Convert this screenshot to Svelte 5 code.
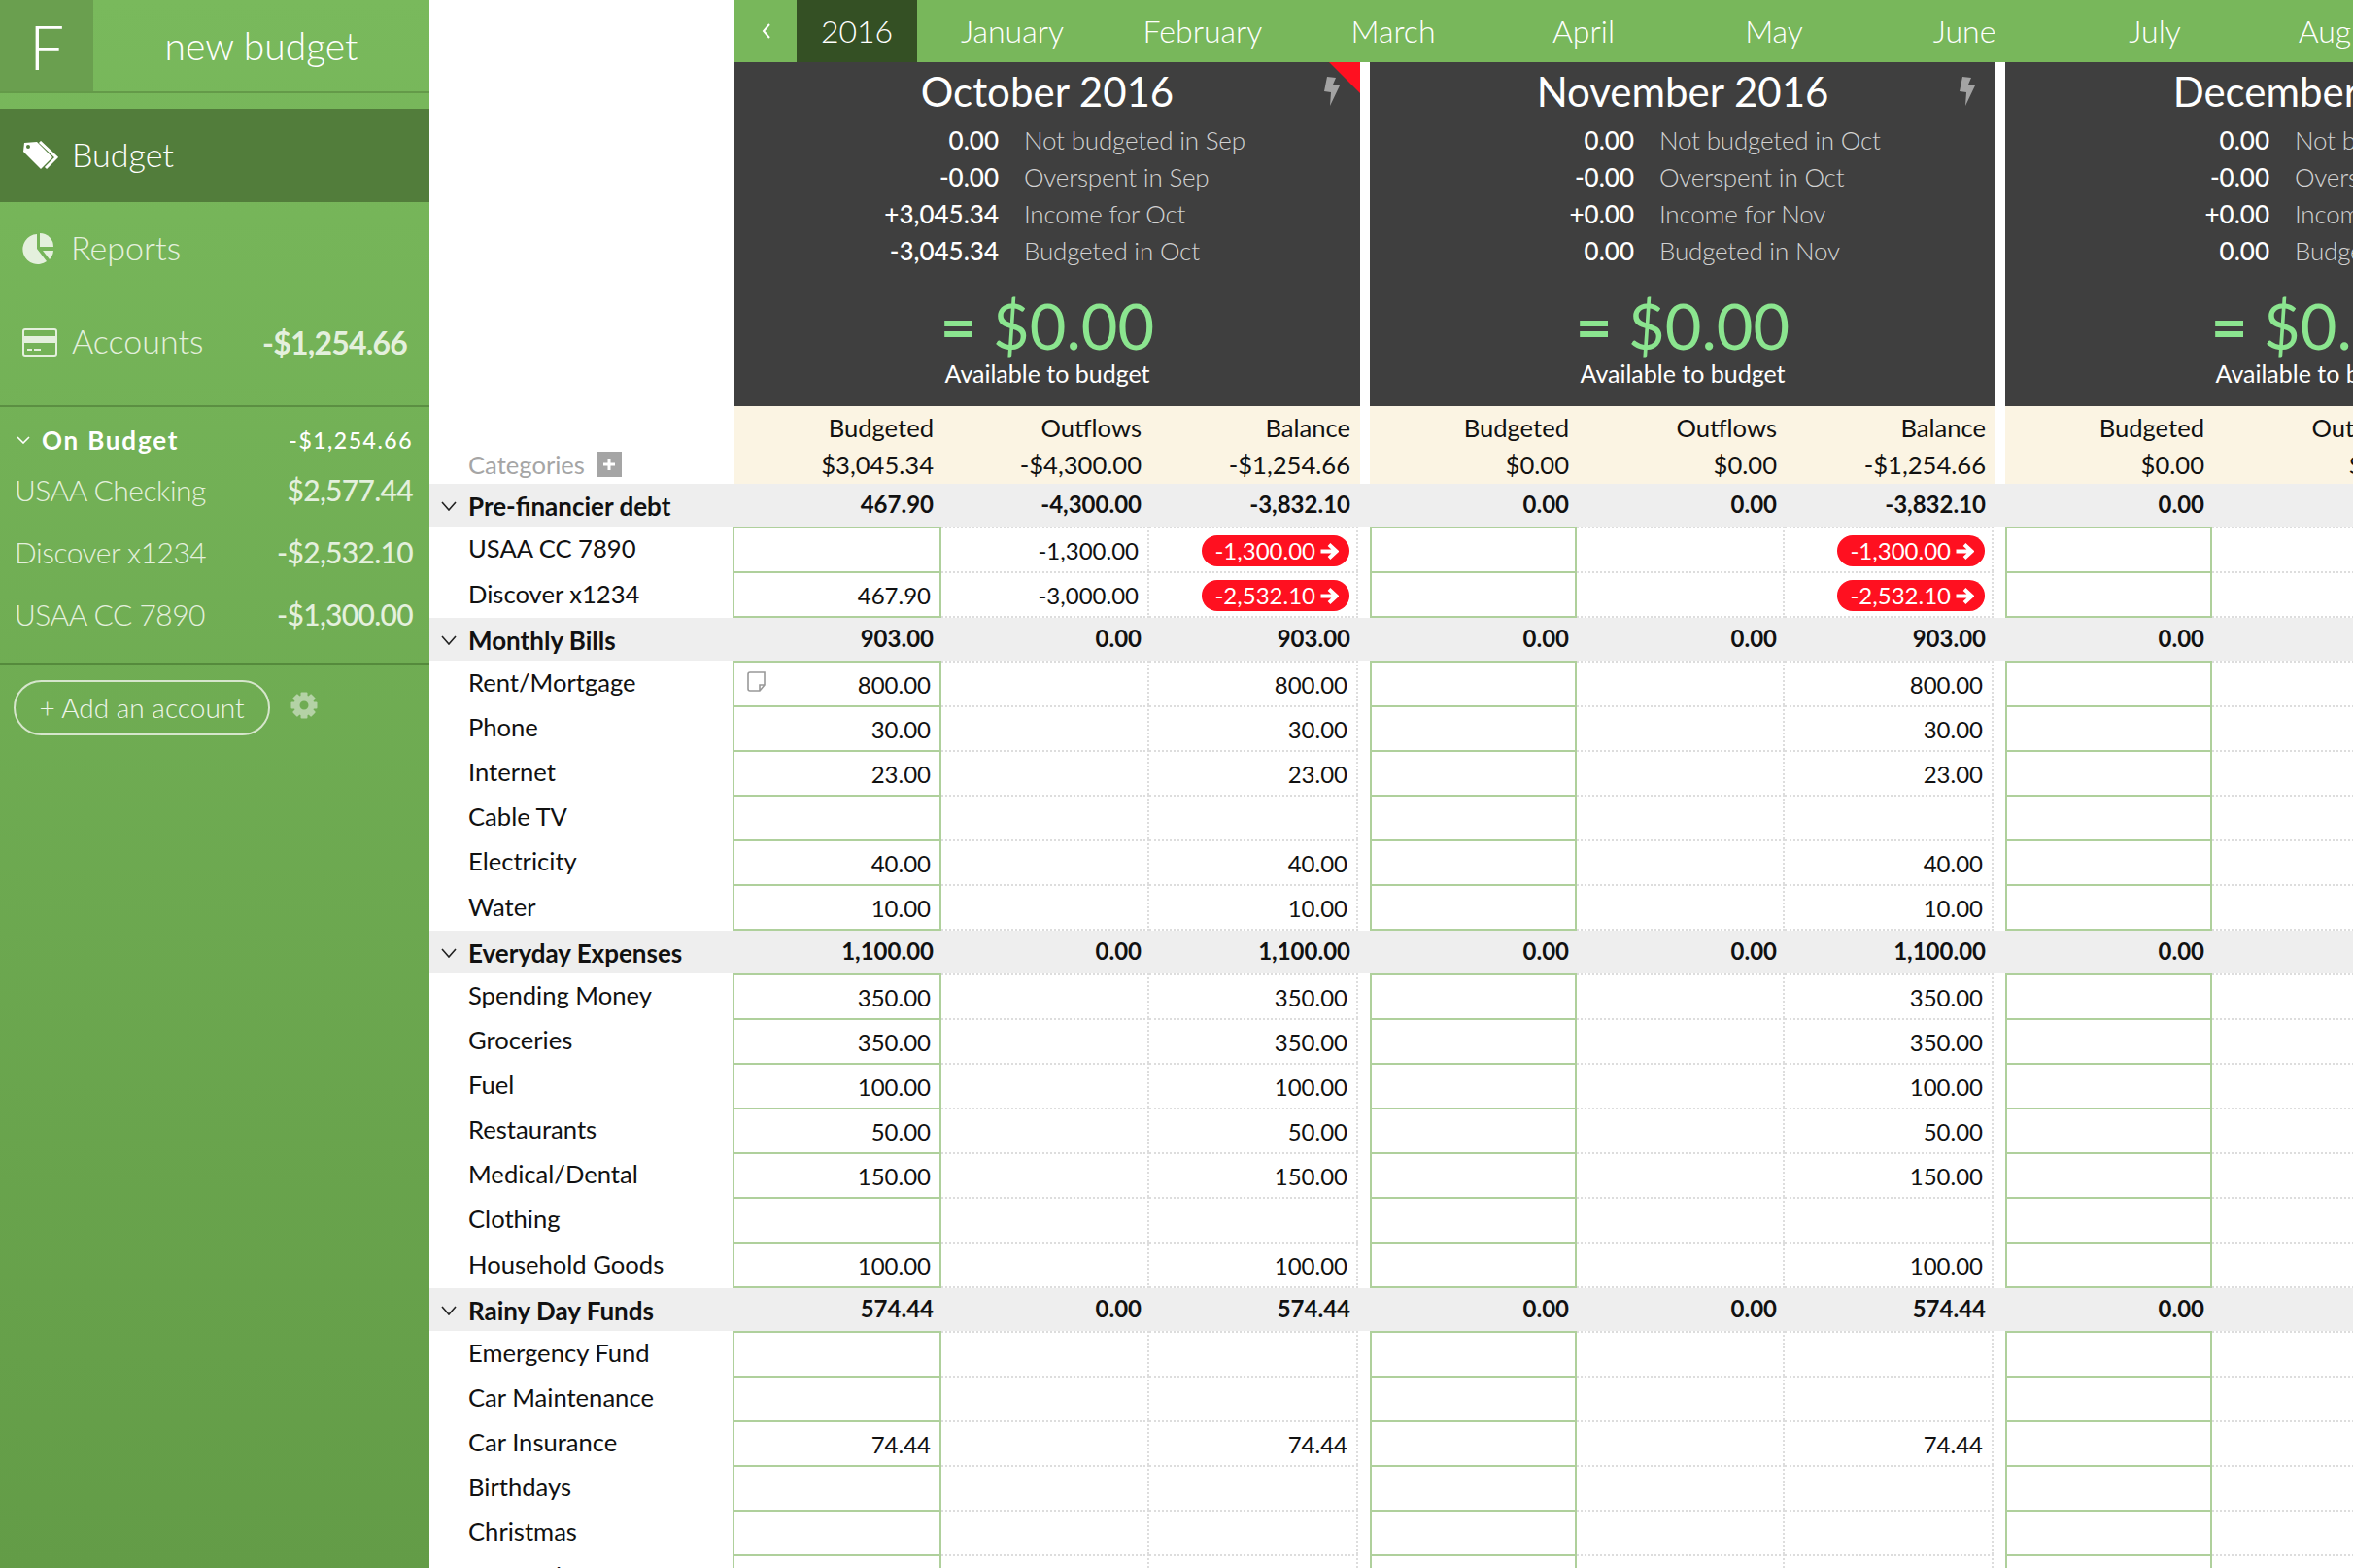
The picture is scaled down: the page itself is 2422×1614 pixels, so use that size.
<script>
  const monthNames = ['January', 'February', 'March', 'April', 'May', 'June', 'July', 'August'];

  const months = [
    {
      title: 'October 2016', flagged: true, total: '$0.00',
      summary: [
        ['0.00', 'Not budgeted in Sep'], ['-0.00', 'Overspent in Sep'],
        ['+3,045.34', 'Income for Oct'], ['-3,045.34', 'Budgeted in Oct']
      ],
      head: ['$3,045.34', '-$4,300.00', '-$1,254.66']
    },
    {
      title: 'November 2016', total: '$0.00',
      summary: [
        ['0.00', 'Not budgeted in Oct'], ['-0.00', 'Overspent in Oct'],
        ['+0.00', 'Income for Nov'], ['0.00', 'Budgeted in Nov']
      ],
      head: ['$0.00', '$0.00', '-$1,254.66']
    },
    {
      title: 'December 2016', total: '$0.00',
      summary: [
        ['0.00', 'Not budgeted in Nov'], ['-0.00', 'Overspent in Nov'],
        ['+0.00', 'Income for Dec'], ['0.00', 'Budgeted in Dec']
      ],
      head: ['$0.00', '$0.00', '-$1,254.66']
    }
  ];

  // budgeted, outflows, balance for October; later months carry the balance over
  const groups = [
    { name: 'Pre-financier debt', totals: ['467.90', '-4,300.00', '-3,832.10'], rows: [
      { name: 'USAA CC 7890', out: '-1,300.00', bal: '-1,300.00', over: true },
      { name: 'Discover x1234', bud: '467.90', out: '-3,000.00', bal: '-2,532.10', over: true }
    ] },
    { name: 'Monthly Bills', totals: ['903.00', '0.00', '903.00'], rows: [
      { name: 'Rent/Mortgage', bud: '800.00', bal: '800.00', note: true },
      { name: 'Phone', bud: '30.00', bal: '30.00' },
      { name: 'Internet', bud: '23.00', bal: '23.00' },
      { name: 'Cable TV' },
      { name: 'Electricity', bud: '40.00', bal: '40.00' },
      { name: 'Water', bud: '10.00', bal: '10.00' }
    ] },
    { name: 'Everyday Expenses', totals: ['1,100.00', '0.00', '1,100.00'], rows: [
      { name: 'Spending Money', bud: '350.00', bal: '350.00' },
      { name: 'Groceries', bud: '350.00', bal: '350.00' },
      { name: 'Fuel', bud: '100.00', bal: '100.00' },
      { name: 'Restaurants', bud: '50.00', bal: '50.00' },
      { name: 'Medical/Dental', bud: '150.00', bal: '150.00' },
      { name: 'Clothing' },
      { name: 'Household Goods', bud: '100.00', bal: '100.00' }
    ] },
    { name: 'Rainy Day Funds', totals: ['574.44', '0.00', '574.44'], rows: [
      { name: 'Emergency Fund' },
      { name: 'Car Maintenance' },
      { name: 'Car Insurance', bud: '74.44', bal: '74.44' },
      { name: 'Birthdays' },
      { name: 'Christmas' },
      { name: 'Personal' }
    ] }
  ];

  const accounts = [
    ['USAA Checking', '$2,577.44'],
    ['Discover x1234', '-$2,532.10'],
    ['USAA CC 7890', '-$1,300.00']
  ];
</script>

{#snippet chevron()}
  <svg class="chev" viewBox="0 0 16 10"><polyline points="1,1 8,9 15,1" /></svg>
{/snippet}

<div class="app">
  <aside class="side">
    <div class="brand">
      <div class="logo">F</div>
      <div class="bname">new budget</div>
    </div>

    <nav class="nav">
      <div class="nav-item active">
        <svg class="ico-tag" viewBox="0 0 37 30">
          <path class="fill" d="M2 2 15 1 31 17 19 29 1 11Z" stroke-linejoin="round" />
          <circle cx="6" cy="6" r="2" class="hole" />
          <polyline class="line" points="18,1 35,17 24,28" />
        </svg>
        <span>Budget</span>
      </div>
      <div class="nav-item">
        <svg class="ico-pie" viewBox="0 0 33 32">
          <path d="M15 1A15.5 15.5 0 1 0 25 29L15 16Z" />
          <path d="M18 0A14 14 0 0 1 32 14H18Z" />
          <path d="M21 18H32A15 15 0 0 1 28 27Z" />
        </svg>
        <span>Reports</span>
      </div>
      <div class="nav-item accounts">
        <svg class="ico-card" viewBox="0 0 36 29">
          <rect x="1" y="1" width="34" height="27" rx="2" class="outline" />
          <rect x="1" y="8" width="34" height="7" />
          <rect x="5" y="21" width="5" height="2" />
          <rect x="12" y="21" width="7" height="2" />
        </svg>
        <span>Accounts</span>
        <b>-$1,254.66</b>
      </div>
    </nav>

    <section class="acc">
      <div class="acc-head">
        <svg class="acc-chev" viewBox="0 0 14 8"><polyline points="1,1 7,7 13,1" /></svg>
        <span>On Budget</span>
        <b>-$1,254.66</b>
      </div>
      {#each accounts as [name, amount]}
        <div class="acc-row"><span>{name}</span><b>{amount}</b></div>
      {/each}
    </section>

    <div class="acc-foot">
      <div class="add">+ Add an account</div>
      <svg class="gear" viewBox="0 0 28 28">
        {#each [0, 45, 90, 135, 180, 225, 270, 315] as deg}
          <rect x="10.5" y="0.5" width="7" height="6" rx="1" transform="rotate({deg} 14 14)" />
        {/each}
        <circle cx="14" cy="14" r="7.5" class="gear-ring" />
      </svg>
    </div>
  </aside>

  <main class="main">
    <div class="bar">
      <div class="back">
        <svg viewBox="0 0 10 18"><polyline points="8,2 2,9 8,16" /></svg>
      </div>
      <div class="year">2016</div>
      {#each monthNames as m}
        <div class="m">{m}</div>
      {/each}
    </div>

    <div class="tops">
      <div class="side-gap"></div>
      {#each months as mo}
        <div class="sheet">
          {#if mo.flagged}<div class="flag"></div>{/if}
          <svg class="bolt" viewBox="0 0 16 30"><path d="M3 0 12 1 9 8 16 9 6 30 7 16 0 15Z" /></svg>
          <h2>{mo.title}</h2>
          <div class="summary">
            {#each mo.summary as [num, label]}
              <b>{num}</b><span>{label}</span>
            {/each}
          </div>
          <div class="total"><span class="eq">=</span> {mo.total}</div>
          <div class="avail">Available to budget</div>
        </div>
      {/each}
    </div>

    <div class="tops heads">
      <div class="side-gap cats">
        <span>Categories</span>
        <svg class="plus" viewBox="0 0 26 26"><rect width="26" height="26" /><path d="M13 7V19M7 13H19" /></svg>
      </div>
      {#each months as mo}
        <div class="head-block">
          <div class="cols head-labels"><span>Budgeted</span><span>Outflows</span><span>Balance</span></div>
          <div class="cols">
            {#each mo.head as h}<span>{h}</span>{/each}
          </div>
        </div>
      {/each}
    </div>

    {#each groups as g}
      <div class="grow">
        <div class="label">{@render chevron()}<span>{g.name}</span></div>
        {#each months as mo, i}
          <div class="cols gcols">
            <span>{i === 0 ? g.totals[0] : '0.00'}</span>
            <span>{i === 0 ? g.totals[1] : '0.00'}</span>
            <span>{g.totals[2]}</span>
          </div>
        {/each}
      </div>
      {#each g.rows as r}
        <div class="row">
          <div class="label name">{r.name}</div>
          {#each months as mo, i}
            <div class="cells" class:first={i === 0}>
              <div class="cell bud">
                {#if i === 0 && r.note}
                  <svg class="note" viewBox="0 0 21 21"><path d="M3 1H18V14L13 20H3A2 2 0 0 1 1 18V3A2 2 0 0 1 3 1ZM13 20V14H18" /></svg>
                {/if}
                {i === 0 ? (r.bud ?? '') : ''}
              </div>
              <div class="cell dot">{i === 0 ? (r.out ?? '') : ''}</div>
              <div class="cell dot">
                {#if r.over}
                  <span class="pill">{r.bal}<svg viewBox="0 0 20 17"><path d="M1.5 8.5H17M10 1.5 17.5 8.5 10 15.5" /></svg></span>
                {:else}
                  {r.bal ?? ''}
                {/if}
              </div>
            </div>
          {/each}
        </div>
      {/each}
    {/each}
  </main>
</div>

<style>
  :global(body) {
    margin: 0;
    background: #fff;
  }

  .app {
    display: flex;
    width: 2422px;
    height: 1614px;
    overflow: hidden;
    font-family: Lato, "Open Sans", sans-serif;
    color: #111;
  }

  /* === Sidebar === */

  .side {
    flex: 0 0 442px;
    color: #fff;
    background: linear-gradient(#79b95c, #639c47);
  }

  .brand {
    display: flex;
    height: 94px;
    border-bottom: 2px solid #649a49;
  }

  .logo {
    width: 96px;
    background: #6a9f4f;
    font-size: 64px;
    font-weight: 300;
    line-height: 96px;
    text-indent: 30px;
  }

  .bname {
    flex: 1;
    text-align: center;
    font-size: 39px;
    font-weight: 300;
    line-height: 94px;
  }

  .nav {
    margin-top: 16px;
    padding-bottom: 17px;
    border-bottom: 2px solid #5b8f42;
  }

  .nav-item {
    display: flex;
    align-items: center;
    height: 96px;
    padding: 0 23px;
    font-size: 34px;
    font-weight: 300;
    color: #e4f0dd;
  }

  .nav-item span {
    margin-bottom: 3px;
  }

  .nav-item svg {
    flex: none;
    fill: currentColor;
  }

  .active {
    background: #527d3b;
    color: #fff;
  }

  .accounts b {
    margin-left: auto;
    font-size: 32px;
    font-weight: 700;
    letter-spacing: -0.8px;
  }

  .ico-tag {
    width: 37px;
    height: 30px;
    margin-right: 14px;
  }

  .ico-tag .hole {
    fill: #527d3b;
  }

  .ico-tag .line {
    fill: none;
    stroke: #fff;
    stroke-width: 3;
  }

  .ico-pie {
    width: 33px;
    height: 32px;
    margin-right: 17px;
  }

  .ico-card {
    width: 36px;
    height: 29px;
    margin-right: 15px;
  }

  .ico-card .outline {
    fill: none;
    stroke: currentColor;
    stroke-width: 2;
  }

  .acc {
    padding: 14px 17px 18px 15px;
    border-bottom: 2px solid #558a3c;
  }

  .acc-head {
    display: flex;
    align-items: center;
    height: 39px;
    font-size: 26px;
    font-weight: 700;
    letter-spacing: 1.8px;
  }

  .acc-head b {
    margin-left: auto;
    font-size: 23px;
    font-weight: 500;
    letter-spacing: 1.5px;
  }

  .acc-chev {
    width: 14px;
    height: 8px;
    margin: 0 12px 0 2px;
    fill: none;
    stroke: #fff;
    stroke-width: 1.6;
  }

  .acc-row {
    display: flex;
    justify-content: space-between;
    align-items: center;
    height: 64px;
    font-size: 30px;
    font-weight: 300;
    letter-spacing: -0.5px;
    color: #e4f0dd;
  }

  .acc-row b {
    font-weight: 500;
    letter-spacing: -0.7px;
  }

  .acc-foot {
    display: flex;
    align-items: flex-start;
    padding: 16px 14px;
  }

  .add {
    width: 260px;
    height: 53px;
    border: 2px solid #d6e6cc;
    border-radius: 29px;
    text-align: center;
    font-size: 28px;
    font-weight: 300;
    line-height: 53px;
    color: #eef5ea;
  }

  .gear {
    width: 28px;
    height: 28px;
    margin: 12px 0 0 21px;
    fill: #b4d2a6;
  }

  .gear-ring {
    fill: none;
    stroke: #b4d2a6;
    stroke-width: 6;
  }

  /* === Barre des mois === */

  .main {
    flex: 1;
    min-width: 0;
    overflow: hidden;
  }

  .bar {
    display: flex;
    width: 1980px;
    height: 64px;
    margin-left: 314px;
    background: #78b75b;
    color: #fff;
    font-size: 32px;
    font-weight: 300;
    line-height: 64px;
    white-space: nowrap;
  }

  .back {
    flex: 0 0 64px;
    display: flex;
    align-items: center;
    justify-content: center;
    padding-left: 2px;
    box-sizing: border-box;
  }

  .back svg {
    width: 10px;
    height: 18px;
    fill: none;
    stroke: #fff;
    stroke-width: 2;
  }

  .year {
    flex: 0 0 124px;
    background: #345024;
    text-align: center;
  }

  .m {
    flex: 0 0 196px;
    text-align: center;
  }

  /* === En-têtes de mois === */

  .tops {
    display: flex;
    gap: 10px;
    width: 2200px;
  }

  .side-gap {
    flex: 0 0 304px;
  }

  .sheet {
    position: relative;
    flex: 0 0 644px;
    height: 354px;
    background: #3f3f3f;
    color: #fff;
    text-align: center;
    overflow: hidden;
  }

  .flag {
    position: absolute;
    top: 0;
    right: 0;
    border-top: 32px solid #ff1020;
    border-left: 32px solid transparent;
  }

  .bolt {
    position: absolute;
    top: 15px;
    right: 21px;
    width: 16px;
    height: 30px;
    fill: #a3a3a3;
  }

  h2 {
    margin: 0;
    padding-top: 5px;
    padding-bottom: 1px;
    font-size: 42px;
    font-weight: 400;
    line-height: 50px;
  }

  .summary {
    display: grid;
    grid-template-columns: 272px auto;
    column-gap: 26px;
    justify-content: start;
    margin-top: 5px;
    text-align: left;
    font-size: 26px;
    line-height: 38px;
  }

  .summary b {
    text-align: right;
    font-weight: 500;
  }

  .summary span {
    font-weight: 300;
    letter-spacing: -0.2px;
    color: #d2d2d2;
  }

  .total {
    margin-top: 23px;
    color: #8be58f;
    font-size: 65px;
    font-weight: 400;
    line-height: 70px;
  }

  .eq {
    font-weight: 700;
  }

  .avail {
    font-size: 25px;
    font-weight: 400;
    line-height: 28px;
  }

  /* === En-têtes de colonnes === */

  .heads {
    font-size: 25.6px;
  }

  .cats {
    display: flex;
    align-items: center;
    gap: 12px;
    height: 36px;
    align-self: flex-end;
    margin-bottom: 2px;
    padding-left: 40px;
    box-sizing: border-box;
    color: #a5a5a5;
  }

  .plus {
    width: 26px;
    height: 26px;
    fill: #a5a5a5;
    stroke: none;
  }

  .plus path {
    stroke: #fff;
    stroke-width: 3;
  }

  .head-block {
    flex: 0 0 644px;
    height: 80px;
    padding-top: 4px;
    box-sizing: border-box;
    background: #fbf4e3;
  }

  .cols {
    display: grid;
    grid-template-columns: 213px 214px 215px 2px;
    height: 37px;
    line-height: 37px;
    text-align: right;
  }

  .head-labels {
    height: 38px;
  }

  .cols span {
    padding-right: 8px;
  }

  /* === Lignes du tableau === */

  .grow,
  .row {
    display: flex;
    gap: 10px;
    width: 2200px;
    font-size: 25.6px;
  }

  .grow {
    height: 44px;
    background: #eee;
    font-weight: 700;
  }

  .row {
    height: 46px;
  }

  .row:has(+ .grow) {
    height: 48px;
  }

  .label {
    flex: 0 0 304px;
    display: flex;
    align-items: center;
    padding-left: 12px;
    box-sizing: border-box;
  }

  .grow .label {
    padding-top: 2px;
    font-size: 26px;
  }

  .name {
    padding: 0 0 3px 40px;
  }

  .chev {
    flex: none;
    width: 16px;
    height: 10px;
    margin-right: 12px;
    fill: none;
    stroke: #222;
    stroke-width: 1.6;
  }

  .gcols {
    flex: 0 0 644px;
    height: 42px;
    font-size: 24px;
    line-height: 42px;
  }

  .cells {
    flex: 0 0 644px;
    display: grid;
    grid-template-columns: 213px 214px 215px;
    font-size: 24px;
  }

  .cell {
    position: relative;
    box-sizing: border-box;
    padding: 7px 11px 0 0;
    text-align: right;
    line-height: 36px;
  }

  .bud {
    border: 2px solid #afd09c;
    border-bottom: 0;
    padding-right: 9px;
    padding-top: 5px;
  }

  .first .bud {
    margin-left: -2px;
  }

  .row:has(+ .grow) .bud {
    border-bottom: 2px solid #afd09c;
  }

  .dot {
    border-top: 2px dotted #ddd;
    border-right: 2px dotted #ddd;
    padding-top: 5px;
    padding-right: 9px;
  }

  .row:has(+ .grow) .dot {
    border-bottom: 2px dotted #ddd;
  }

  .note {
    position: absolute;
    left: 13px;
    top: 9px;
    width: 21px;
    height: 21px;
    fill: none;
    stroke: #999;
    stroke-width: 1.6;
  }

  .pill {
    display: inline-flex;
    align-items: center;
    height: 32px;
    gap: 4px;
    margin-right: -2px;
    padding: 0 11px 0 13px;
    border-radius: 16px;
    background: #ff1020;
    color: #fff;
    line-height: 32px;
  }

  .pill svg {
    width: 20px;
    height: 17px;
    fill: none;
    stroke: #fff;
    stroke-width: 4;
  }
</style>
